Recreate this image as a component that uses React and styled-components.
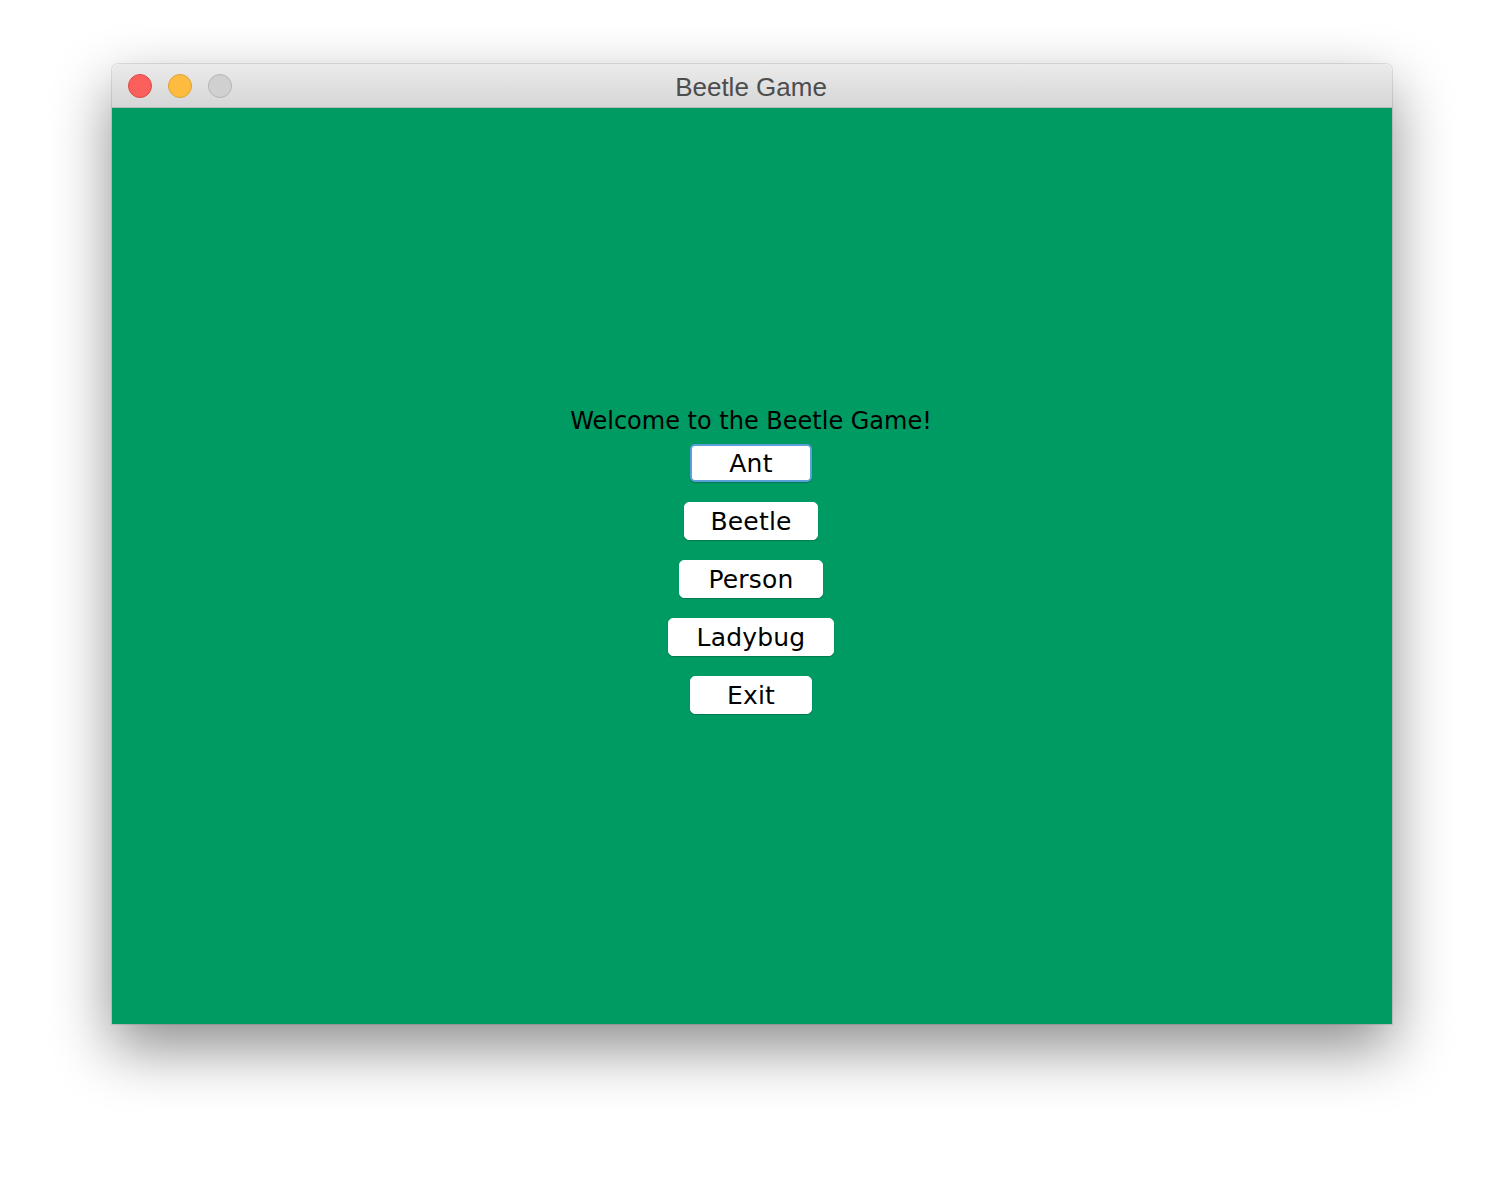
import React from 'react';
import styled, { createGlobalStyle } from 'styled-components';

const GlobalStyle = createGlobalStyle`
  html, body {
    margin: 0;
    padding: 0;
    background: #ffffff;
  }
  body {
    width: 1504px;
    height: 1184px;
    overflow: hidden;
  }
`;

const Page = styled.div`
  padding: 64px 0 0 112px;
`;

const Window = styled.div`
  width: 1280px;
  height: 960px;
  display: flex;
  flex-direction: column;
  border-radius: 6px 6px 0 0;
  overflow: hidden;
  box-shadow: 0 24px 60px rgba(0, 0, 0, 0.45), 0 0 0 1px rgba(0, 0, 0, 0.1);
`;

const TitleBar = styled.div`
  height: 43px;
  flex: none;
  display: flex;
  align-items: center;
  position: relative;
  background: linear-gradient(#ebebeb, #d6d6d6);
  border-bottom: 1px solid #b9b9b9;
`;

const Lights = styled.div`
  display: flex;
  gap: 16px;
  padding-left: 16px;
  padding-top: 1px;
`;

const Light = styled.span`
  width: 24px;
  height: 24px;
  border-radius: 50%;
  box-sizing: border-box;
  background: ${p => p.color};
  border: 1px solid ${p => p.edge};
`;

const Title = styled.div`
  position: absolute;
  left: 0;
  right: 2px;
  top: 8px;
  text-align: center;
  font-family: "Liberation Sans", Arial, sans-serif;
  font-size: 26px;
  line-height: 30px;
  color: #4d4d4d;
  pointer-events: none;
`;

const Content = styled.div`
  flex: 1;
  background: #009a63;
  display: flex;
  flex-direction: column;
  align-items: center;
  padding-top: 298px;
  padding-right: 2px;
`;

const Welcome = styled.div`
  font-family: "DejaVu Sans", Verdana, sans-serif;
  font-size: 24px;
  letter-spacing: 0;
  color: #000;
  line-height: 30px;
  margin-bottom: 8px;
`;

const Menu = styled.div`
  display: flex;
  flex-direction: column;
  align-items: center;
  gap: 20px;
`;

const Button = styled.button`
  width: ${p => p.w}px;
  height: 38px;
  box-sizing: border-box;
  background: #ffffff;
  border: ${p => (p.focused ? '2px solid #5a9fd8' : '1px solid #ffffff')};
  border-radius: 5px;
  font-family: "DejaVu Sans", Verdana, sans-serif;
  font-size: 25px;
  letter-spacing: 0.2px;
  color: #000;
  padding: 0;
  line-height: 1;
  display: flex;
  align-items: center;
  justify-content: center;
  box-shadow: 0 1px 1px rgba(0, 0, 0, 0.2);
`;

const buttons = [
  { label: 'Ant', w: 122, focused: true },
  { label: 'Beetle', w: 134 },
  { label: 'Person', w: 144 },
  { label: 'Ladybug', w: 166 },
  { label: 'Exit', w: 122 },
];

export default function App() {
  return (
    <Page>
      <GlobalStyle />
      <Window>
        <TitleBar>
          <Lights>
            <Light color="#fc605c" edge="#de4a45" />
            <Light color="#fdbc40" edge="#dea236" />
            <Light color="#d0d0d0" edge="#b4b4b4" />
          </Lights>
          <Title>Beetle Game</Title>
        </TitleBar>
        <Content>
          <Welcome>Welcome to the Beetle Game!</Welcome>
          <Menu>
            {buttons.map(b => (
              <Button key={b.label} w={b.w} focused={b.focused}>
                {b.label}
              </Button>
            ))}
          </Menu>
        </Content>
      </Window>
    </Page>
  );
}
